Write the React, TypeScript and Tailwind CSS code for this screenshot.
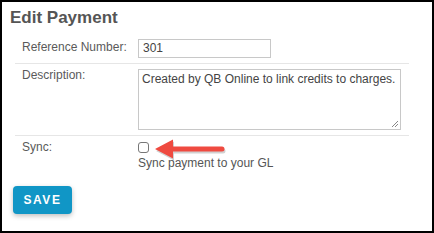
import React from "react";

function Arrow() {
  return (
    <svg width="78" height="24" viewBox="0 0 78 24" className="absolute left-[150px] top-[135px]">
      <g transform="translate(1,2)" fill="#000" opacity="0.18">
        <path d="M3 12 L21 2.5 L21 9.5 L70 9.5 A2.5 2.5 0 0 1 70 14.5 L21 14.5 L21 21.5 Z" />
      </g>
      <path d="M3 12 L21 2.5 L21 9.5 L70 9.5 A2.5 2.5 0 0 1 70 14.5 L21 14.5 L21 21.5 Z" fill="#ef4a40" />
    </svg>
  );
}

export default function App() {
  const font = { fontFamily: '"Liberation Sans", Arial, sans-serif' };
  return (
    <div style={font} className="relative box-border h-[233px] w-[434px] overflow-hidden border-2 border-black bg-white text-[#5a5a5a]">
      <h1 className="pl-[8px] pt-[5px] text-[17px] font-bold leading-[22px] text-[#555]">Edit Payment</h1>
      <div className="ml-[13px] mt-[6px] w-[394px] text-[12px]">
        <div className="flex border-b border-[#e6e6e6]">
          <div className="w-[123px] pl-[7px] pt-[5px] leading-[15px]">Reference Number:</div>
          <div className="pb-[5px] pt-[4px]">
            <div className="box-border h-[19px] w-[133px] border border-[#c8c8c8] px-[4px] text-[12px] leading-[17px] text-[#444]">301</div>
          </div>
        </div>
        <div className="flex border-b border-[#e6e6e6]">
          <div className="w-[123px] pl-[7px] pt-[4px] leading-[15px]">Description:</div>
          <div className="pb-[5px] pt-[5px]">
            <div className="relative box-border h-[61px] w-[263px] border border-[#c8c8c8] px-[3px] pt-[2px] text-[12px] leading-[15px] text-[#444]">
              Created by QB Online to link credits to charges.
              <svg width="8" height="8" viewBox="0 0 8 8" className="absolute bottom-[1px] right-[1px]">
                <path d="M7 1 L1 7 M7 4 L4 7" stroke="#888" strokeWidth="1" />
              </svg>
            </div>
          </div>
        </div>
        <div className="flex">
          <div className="w-[123px] pl-[7px] pt-[4px] leading-[15px]">Sync:</div>
          <div className="pt-[6px]">
            <div className="box-border h-[11px] w-[11px] rounded-[3px] border border-[#777] bg-white" />
            <div className="mt-[3px] text-[12px] leading-[15px] text-[#555]">Sync payment to your GL</div>
          </div>
        </div>
      </div>
      <Arrow />
      <button className="ml-[11px] mt-[15px] h-[28px] w-[59px] rounded-[4px] bg-[#1096c6] text-[12px] font-bold tracking-[1.5px] text-white shadow-[0_2px_5px_rgba(0,0,0,0.25)]">
        SAVE
      </button>
    </div>
  );
}
